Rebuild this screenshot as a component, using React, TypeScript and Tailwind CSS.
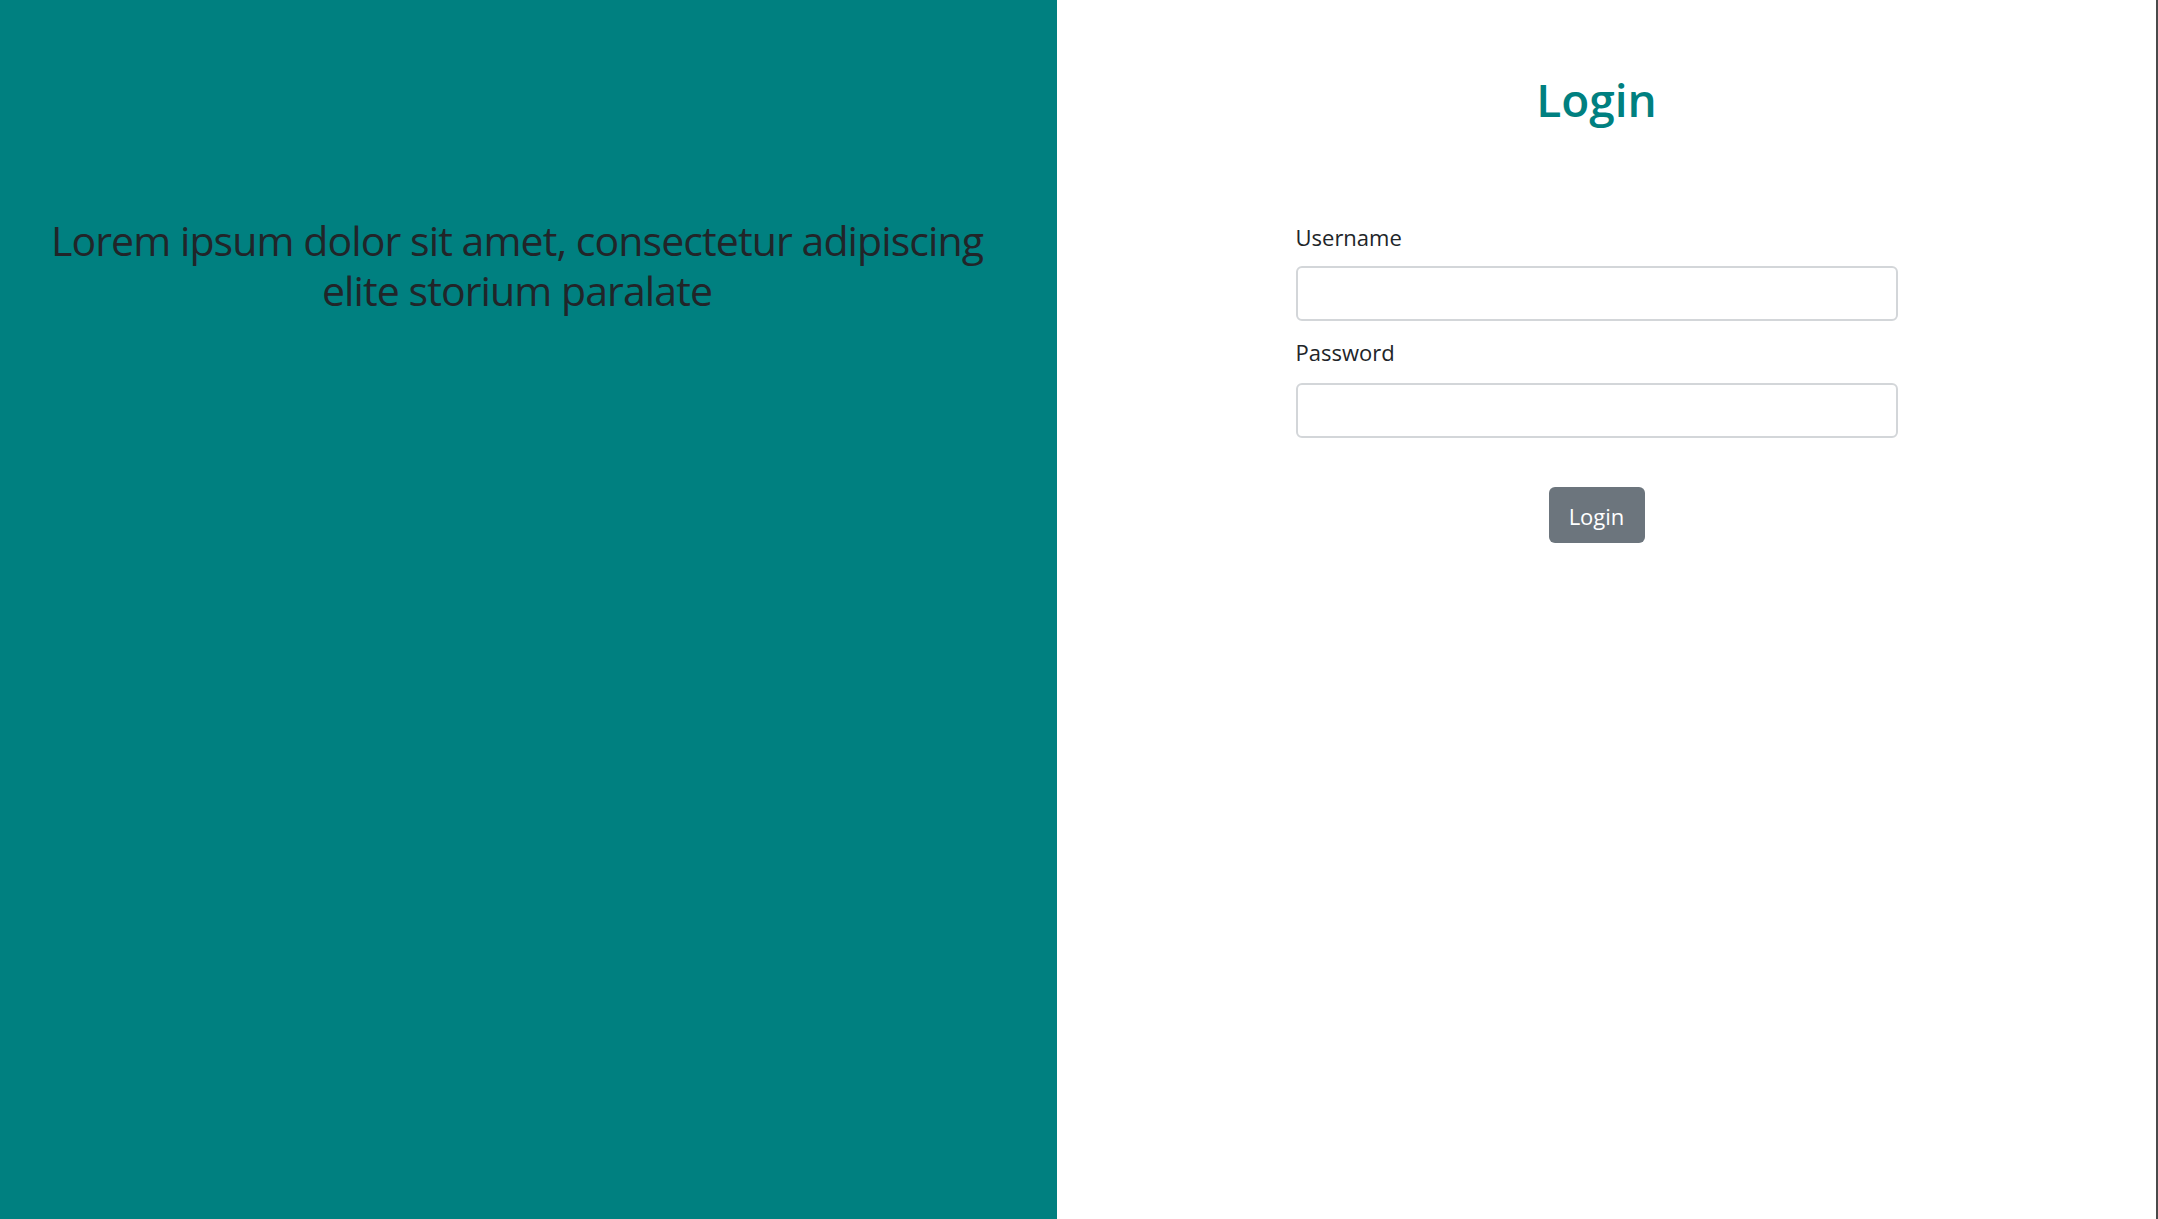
import React from "react";

export default function App() {
  return (
    <div
      className="flex h-[1219px] w-full overflow-hidden bg-white"
      style={{ fontFamily: '"Open Sans", "Noto Sans", sans-serif' }}
    >
      <div className="h-full w-[1057px] shrink-0 bg-[#008080] pl-[24px] pr-[47px] pt-[215px]">
        <h2 className="text-center text-[41px] font-normal leading-[50px] tracking-[-0.9px] text-[#212529]">
          Lorem ipsum dolor sit amet, consectetur adipiscing elite storium paralate
        </h2>
      </div>
      <div className="flex h-full flex-1 flex-col items-center pr-[20px] pt-[72px]">
        <h1 className="text-[46px] font-semibold leading-[55px] text-[#008080]">Login</h1>
        <form className="mt-[94px] flex w-[602px] flex-col">
          <label className="block h-[33px] text-[22px] leading-[33px] text-[#212529]">Username</label>
          <input
            type="text"
            className="mt-[12px] block h-[55px] w-full rounded-[6px] border-2 border-[#d3d6d9] bg-white px-3 text-[22px] outline-none"
          />
          <label className="mt-[15px] block h-[33px] text-[22px] leading-[33px] text-[#212529]">Password</label>
          <input
            type="password"
            className="mt-[14px] block h-[55px] w-full rounded-[6px] border-2 border-[#d3d6d9] bg-white px-3 text-[22px] outline-none"
          />
          <div className="mt-[49px] flex justify-center">
            <button
              type="button"
              className="flex h-[56px] w-[96px] items-center justify-center rounded-[6px] bg-[#6c757d] pt-[2px] text-[22px] leading-none text-white"
            >
              Login
            </button>
          </div>
        </form>
      </div>
      <div className="h-full w-[2px] shrink-0 bg-[#4a4a4a]" />
    </div>
  );
}
